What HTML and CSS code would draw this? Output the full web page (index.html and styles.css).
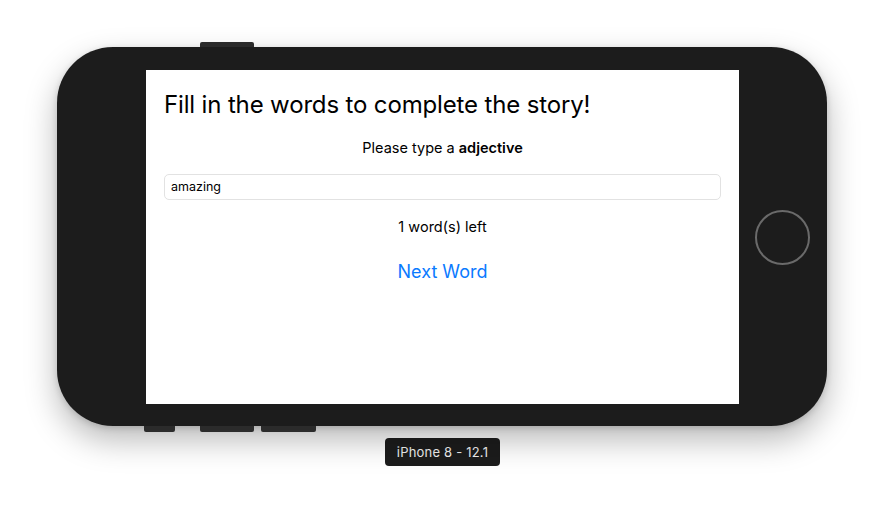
FILE: index.html
```html
<!DOCTYPE html>
<html>
<head>
<meta charset="utf-8">
<link rel="stylesheet" href="styles.css">
</head>
<body>
<div class="stage">
  <div class="phone">
    <span class="hw hw-top"></span>
    <span class="hw hw-b1"></span>
    <span class="hw hw-b2"></span>
    <span class="hw hw-b3"></span>
    <div class="screen">
      <h1 class="title">Fill in the words to complete the story!</h1>
      <p class="prompt">Please type a <b>adjective</b></p>
      <div class="field">amazing</div>
      <p class="left">1 word(s) left</p>
      <p class="next">Next Word</p>
    </div>
    <div class="home-col"><span class="home"></span></div>
  </div>
  <div class="label">iPhone 8 - 12.1</div>
</div>
</body>
</html>
```
FILE: styles.css
```css
html, body {
  margin: 0;
  padding: 0;
  background: #ffffff;
  font-family: Inter, "Liberation Sans", sans-serif;
}
.stage {
  width: 885px;
  height: 510px;
  display: flex;
  flex-direction: column;
  align-items: flex-start;
  padding: 47px 0 0 57px;
  box-sizing: border-box;
}
.phone {
  position: relative;
  width: 770px;
  height: 379px;
  background: #1c1c1c;
  border-radius: 56px;
  box-shadow: 0 14px 32px rgba(0,0,0,0.28), 0 2px 6px rgba(0,0,0,0.15);
  display: flex;
  padding: 23px 0 22px 89px;
  box-sizing: border-box;
}
.hw {
  position: absolute;
  background: #2b2b2b;
  height: 5px;
}
.hw-top { left: 143px; top: -5px; width: 54px; border-radius: 2px 2px 0 0; }
.hw-b1 { left: 87px; bottom: -6px; width: 31px; height: 6px; border-radius: 0 0 2px 2px; }
.hw-b2 { left: 143px; bottom: -6px; width: 54px; height: 6px; border-radius: 0 0 2px 2px; }
.hw-b3 { left: 204px; bottom: -6px; width: 55px; height: 6px; border-radius: 0 0 2px 2px; }
.screen {
  width: 593px;
  height: 334px;
  background: #ffffff;
  padding: 18px 18px 0 18px;
  box-sizing: border-box;
  display: flex;
  flex-direction: column;
  align-items: center;
}
.title {
  align-self: flex-start;
  margin: 0;
  font-weight: 400;
  font-size: 24px;
  line-height: 34px;
  color: #000;
  letter-spacing: -0.15px;
}
.prompt {
  margin: 16px 0 0 0;
  font-size: 14.5px;
  line-height: 20px;
  color: #000;
}
.prompt b { font-weight: 600; }
.field {
  align-self: stretch;
  margin-top: 16px;
  height: 26px;
  border: 1px solid #e2e2e2;
  border-radius: 5px;
  box-sizing: border-box;
  padding: 0 6px;
  font-size: 12.5px;
  line-height: 24px;
  color: #000;
}
.left {
  margin: 17px 0 0 0;
  font-size: 14.5px;
  line-height: 20px;
  color: #000;
}
.next {
  margin: 23px 0 0 0;
  font-size: 18px;
  line-height: 24px;
  color: #0a7aff;
}
.home-col {
  flex: 1;
  display: flex;
  align-items: center;
  justify-content: center;
}
.home {
  width: 55px;
  height: 55px;
  border: 2px solid #6a6a6a;
  border-radius: 50%;
  box-sizing: border-box;
  margin-right: 2px;
}
.label {
  align-self: center;
  margin: 12px 0 0 -57px;
  background: #1c1c1c;
  color: #f0f0f0;
  font-size: 13px;
  line-height: 28px;
  height: 28px;
  padding: 0 12px;
  border-radius: 4px;
  letter-spacing: 0.2px;
}
```
